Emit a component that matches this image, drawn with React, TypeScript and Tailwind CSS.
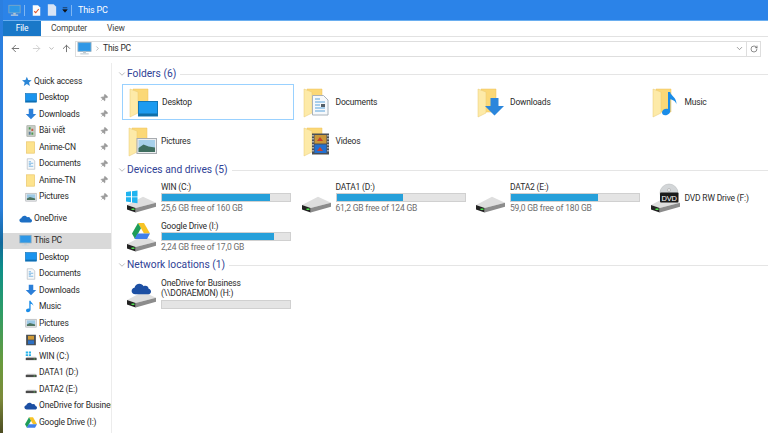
import React from 'react';
import { ArrowLeft, ArrowRight, ArrowUp, ChevronDown, ChevronRight, Pin, RotateCw } from 'lucide-react';

// small shell icons, 16x16 grid
const PcIcon = ({ className }: { className?: string }) => (
  <svg viewBox="0 0 16 16" className={className}>
    <rect x="1" y="1.5" width="14" height="9.5" fill="#3fa4ea" stroke="#8fa7b8" strokeWidth="0.8" />
    <rect x="2" y="2.5" width="12" height="7.5" fill="#2f97e6" />
    <rect x="6.5" y="11" width="3" height="2" fill="#b9c6cf" />
    <rect x="3.5" y="13" width="9" height="1.4" fill="#c9d3da" />
  </svg>
);

const DesktopSmall = () => (
  <svg viewBox="0 0 16 16" className="w-[12px] h-[12px]">
    <rect x="0.5" y="2" width="15" height="11.5" fill="#1a94ee" stroke="#0f6fb3" strokeWidth="0.8" />
    <rect x="1" y="11.5" width="14" height="2" fill="#0f6fb3" />
  </svg>
);

const DownloadSmall = () => (
  <svg viewBox="0 0 16 16" className="w-[12px] h-[12px]">
    <path d="M5 1h6v7h4l-7 7-7-7h4z" fill="#2b7fd9" />
  </svg>
);

const DocSmall = () => (
  <svg viewBox="0 0 16 16" className="w-[12px] h-[12px]">
    <path d="M3 1h7l3 3v11H3z" fill="#f6f8fa" stroke="#a9b2ba" strokeWidth="0.8" />
    <path d="M5 5h3M5 7h6M5 9h3M5 11h6" stroke="#5aa4dc" strokeWidth="1" />
  </svg>
);

const PicSmall = () => (
  <svg viewBox="0 0 16 16" className="w-[12px] h-[12px]">
    <rect x="1" y="3" width="14" height="10.5" fill="#e6e8ea" stroke="#a5a9ad" strokeWidth="0.8" />
    <rect x="2.5" y="4.5" width="11" height="7.5" fill="#9cc9e6" />
    <path d="M2.5 10l4-2 7 2v2h-11z" fill="#4e7460" />
  </svg>
);

const VideoSmall = () => (
  <svg viewBox="0 0 16 16" className="w-[12px] h-[12px]">
    <rect x="1.5" y="1" width="13" height="14" fill="#4a4f55" />
    <rect x="4" y="2.5" width="8" height="5" fill="#d09a35" />
    <rect x="4" y="8.5" width="8" height="5" fill="#2c70c4" />
  </svg>
);

const MusicSmall = () => (
  <svg viewBox="0 0 16 16" className="w-[13px] h-[13px]">
    <path d="M6.5 1h1.6c.4 2.5 3.6 3 3.4 6.5-.2-1.4-1.6-2.6-3.4-2.8V12c0 1.8-1.6 3-3.4 3C3.400 15 2.500 14.200 2.500 13c0-1.500 1.800-2.800 4-2.300z" fill="#1a8ce8" />
  </svg>
);

const YellowSmall = () => (
  <svg viewBox="0 0 16 16" className="w-[13px] h-[13px]">
    <rect x="3" y="1" width="10" height="14" fill="#fde38d" stroke="#e9c467" strokeWidth="0.8" />
  </svg>
);

const NoteSmall = () => (
  <svg viewBox="0 0 16 16" className="w-[12px] h-[12px]">
    <rect x="2.500" y="1" width="11" height="14" fill="#c8cdc6" stroke="#8b9188" strokeWidth="0.7" />
    <rect x="5" y="3" width="2.500" height="3" fill="#4d9a52" />
    <rect x="8.500" y="5" width="2.500" height="3" fill="#c75a45" />
    <rect x="5" y="9" width="2.500" height="4" fill="#5f7f9a" />
    <rect x="8.500" y="10" width="2.500" height="3" fill="#4d9a52" />
  </svg>
);

const CloudSmall = ({ className, color = '#1d6fc4' }: { className?: string; color?: string }) => (
  <svg viewBox="0 0 16 16" className={className}>
    <path d="M3.500 13C1.500 13 .5 11.700.5 10.300c0-1.500 1.100-2.500 2.300-2.600C3.300 5.700 5 4.500 6.700 4.500c1.500 0 2.800.8 3.400 2 .4-.2.9-.3 1.400-.3 1.400 0 2.500 1 2.600 2.300 1 .2 1.900 1 1.900 2.200 0 1.300-1 2.300-2.300 2.300z" fill={color} />
  </svg>
);

const DriveSmall = ({ win = false }: { win?: boolean }) => (
  <svg viewBox="0 0 16 16" className="w-[12px] h-[12px]">
    {win && <path d="M1 2h3v2.500H1zM5 2h3v2.500H5zM1 5.500h3V8H1zM5 5.500h3V8H5z" fill="#27b3ea" />}
    <path d="M1 10.500l2-1.500h11l1.500 1.500z" fill="#c9c9c9" />
    <rect x="1" y="10.500" width="14.500" height="3" fill="#4a4a4a" />
    <rect x="11.500" y="11.500" width="2" height="1" fill="#5cd35c" />
  </svg>
);

const GDriveLogo = ({ className }: { className?: string }) => (
  <svg viewBox="0 0 18 16" className={className}>
    <path d="M6 0h6l6 10.500h-6z" fill="#f7c325" />
    <path d="M6 0l3 5.300L3 16 0 10.500z" fill="#1e9d58" />
    <path d="M5.500 10.500H18L15 16H2.500z" fill="#3f7fea" />
  </svg>
);

const StarSmall = () => (
  <svg viewBox="0 0 16 16" className="w-[11px] h-[11px]">
    <path d="M8.500 1l2 4.800 5 .4-3.800 3.300 1.200 5L8.500 11.800 4.100 14.500l1.200-5L1.500 6.200l5-.4z" fill="#2b86d6" />
  </svg>
);

// large tile icons, 36x36 grid
const FolderBase = () => (
  <>
    <path d="M7 5h15v23H7z" fill="#fbd877" stroke="#ecc25f" strokeWidth="0.5" />
    <path d="M4 5l8 3v21l-8 4z" fill="#fdeaa8" stroke="#e8c873" strokeWidth="0.5" />
  </>
);

const FolderDesktop = () => (
  <svg viewBox="0 0 36 36" className="w-[36px] h-[36px]">
    <FolderBase />
    <rect x="12.500" y="17.500" width="19" height="14.500" fill="#1c9bf0" stroke="#1277b8" />
    <rect x="12.500" y="29.500" width="19" height="2.500" fill="#0f6ea8" />
  </svg>
);

const FolderPictures = () => (
  <svg viewBox="0 0 36 36" className="w-[36px] h-[36px]">
    <FolderBase />
    <rect x="12" y="15.500" width="19.500" height="15" fill="#eceef0" stroke="#a7abb0" />
    <rect x="13.500" y="17" width="16.500" height="12" fill="#a7d0ea" />
    <path d="M13.500 25l5-3.500 5 2 6.500 1V29H13.500z" fill="#3f6e5f" />
  </svg>
);

const FolderDocuments = () => (
  <svg viewBox="0 0 36 36" className="w-[36px] h-[36px]">
    <FolderBase />
    <path d="M12.500 11.500h11l4.500 4.500v15H12.500z" fill="#f7f9fb" stroke="#a9b2ba" />
    <path d="M15 15h5M15 18h10M15 21h5M15 24h10M15 27h10" stroke="#5aa4dc" strokeWidth="1.200" />
    <rect x="21" y="20" width="4" height="3" fill="#556069" />
  </svg>
);

const FolderVideos = () => (
  <svg viewBox="0 0 36 36" className="w-[36px] h-[36px]">
    <FolderBase />
    <rect x="12" y="10.500" width="17" height="21" fill="#4a4f55" />
    <rect x="14.500" y="12" width="12" height="8.500" fill="#c9973a" />
    <rect x="14.500" y="21.500" width="12" height="8.500" fill="#2370cf" />
    <path d="M17 18l3-4 3 4zM17 28l3-4 3 4z" fill="#c8402c" />
    <path d="M13 12v18M28 12v18" stroke="#e5e7e9" strokeWidth="1.200" strokeDasharray="1.500 1.500" />
  </svg>
);

const FolderDownloads = () => (
  <svg viewBox="0 0 36 36" className="w-[36px] h-[36px]">
    <FolderBase />
    <path d="M16.500 14h8v8h5.500l-9.500 9.500L11 22h5.500z" fill="#2b86dc" />
  </svg>
);

const FolderMusic = () => (
  <svg viewBox="0 0 36 36" className="w-[36px] h-[36px]">
    <FolderBase />
    <path d="M19 8h2.200c.5 4 6.500 5 6.300 12.500-.4-2.500-3-4.800-6.300-5.200V27c0 2.500-2.500 4.300-5 4.300-2 0-3.200-1.200-3.200-2.800 0-2.500 3-4.300 6-3.500z" fill="#1a8ce8" />
  </svg>
);

// isometric hard disk, shared by the drive tiles
const Hdd = () => (
  <g>
    <path d="M2 25L18 16.700l13 6-20.300 5.300z" fill="#dedede" />
    <path d="M2 25l8.700 3v4.500L2 29.500z" fill="#222222" />
    <path d="M10.700 28L31 22.700v4L10.700 32.500z" fill="#8c8c8c" />
    <rect x="6.500" y="28.500" width="3" height="1.500" fill="#4ee04e" />
  </g>
);

const DriveWin = () => (
  <svg viewBox="0 0 36 36" className="w-[36px] h-[36px]">
    <Hdd />
    <path d="M1 12l5-.7v5H1zM7 11.200l5.500-.8v6H7zM1 17.300h5v5l-5-.7zM7 17.300h5.500v6L7 22.500z" fill="#1fb4f0" />
  </svg>
);

const DriveData = () => (
  <svg viewBox="0 0 36 36" className="w-[36px] h-[36px]">
    <Hdd />
  </svg>
);

const DriveGoogle = () => (
  <svg viewBox="0 0 36 36" className="w-[36px] h-[36px]">
    <Hdd />
    <svg x="7" y="4" width="18" height="16" viewBox="0 0 18 16">
      <path d="M6 0h6l6 10.500h-6z" fill="#f7c325" />
      <path d="M6 0l3 5.300L3 16 0 10.500z" fill="#1e9d58" />
      <path d="M5.500 10.500H18L15 16H2.500z" fill="#3f7fea" />
    </svg>
  </svg>
);

const DriveCloud = () => (
  <svg viewBox="0 0 36 36" className="w-[36px] h-[36px]">
    <Hdd />
    <svg x="6" y="3" width="20" height="20" viewBox="0 0 16 16">
      <path d="M3.500 13C1.500 13 .5 11.700.5 10.300c0-1.500 1.100-2.500 2.300-2.600C3.300 5.700 5 4.500 6.700 4.500c1.500 0 2.800.8 3.400 2 .4-.2.9-.3 1.400-.3 1.400 0 2.500 1 2.600 2.300 1 .2 1.900 1 1.900 2.200 0 1.300-1 2.300-2.300 2.300z" fill="#1c4fa3" />
    </svg>
  </svg>
);

const DriveDvd = () => (
  <svg viewBox="0 0 36 36" className="w-[36px] h-[36px]">
    <Hdd />
    <circle cx="20" cy="13" r="9" fill="#d3d6d8" stroke="#aeb2b5" strokeWidth="0.5" />
    <circle cx="20" cy="10" r="1.500" fill="#f4f4f4" stroke="#9a9a9a" strokeWidth="0.5" />
    <rect x="11" y="12.500" width="18.500" height="10" rx="1" fill="#1b1b1b" />
    <text x="20.200" y="20.500" textAnchor="middle" fontSize="7.500" fontFamily="Liberation Sans, sans-serif" fill="#ffffff">DVD</text>
  </svg>
);

const quickAccess = [
  { label: 'Desktop', icon: <DesktopSmall /> },
  { label: 'Downloads', icon: <DownloadSmall /> },
  { label: 'Bài viết', icon: <NoteSmall /> },
  { label: 'Anime-CN', icon: <YellowSmall /> },
  { label: 'Documents', icon: <DocSmall /> },
  { label: 'Anime-TN', icon: <YellowSmall /> },
  { label: 'Pictures', icon: <PicSmall /> },
];

const thisPc = [
  { label: 'Desktop', icon: <DesktopSmall /> },
  { label: 'Documents', icon: <DocSmall /> },
  { label: 'Downloads', icon: <DownloadSmall /> },
  { label: 'Music', icon: <MusicSmall /> },
  { label: 'Pictures', icon: <PicSmall /> },
  { label: 'Videos', icon: <VideoSmall /> },
  { label: 'WIN (C:)', icon: <DriveSmall win /> },
  { label: 'DATA1 (D:)', icon: <DriveSmall /> },
  { label: 'DATA2 (E:)', icon: <DriveSmall /> },
  { label: 'OneDrive for Business', icon: <CloudSmall className="w-[13px] h-[13px]" color="#1c4fa3" /> },
  { label: 'Google Drive (I:)', icon: <GDriveLogo className="w-[12px] h-[11px]" /> },
];

const folders = [
  { label: 'Desktop', icon: <FolderDesktop />, selected: true },
  { label: 'Documents', icon: <FolderDocuments /> },
  { label: 'Downloads', icon: <FolderDownloads /> },
  { label: 'Music', icon: <FolderMusic /> },
  { label: 'Pictures', icon: <FolderPictures /> },
  { label: 'Videos', icon: <FolderVideos /> },
];

const drives = [
  { label: 'WIN (C:)', free: '25,6 GB free of 160 GB', fill: 'w-[108px]', icon: <DriveWin /> },
  { label: 'DATA1 (D:)', free: '61,2 GB free of 124 GB', fill: 'w-[66px]', icon: <DriveData /> },
  { label: 'DATA2 (E:)', free: '59,0 GB free of 180 GB', fill: 'w-[87px]', icon: <DriveData /> },
  { label: 'DVD RW Drive (F:)', icon: <DriveDvd /> },
  { label: 'Google Drive (I:)', free: '2,24 GB free of 17,0 GB', fill: 'w-[112px]', icon: <DriveGoogle /> },
];

const NavRow = ({ label, icon, pinned }: { label: string; icon: React.ReactNode; pinned?: boolean }) => (
  <div className="flex items-center h-[16.5px] pl-[19px]">
    <span className="w-[17px] flex justify-center shrink-0">{icon}</span>
    <span className="flex-1 min-w-0 whitespace-nowrap overflow-hidden">{label}</span>
    {pinned && <Pin size={8} className="shrink-0 mr-[3px] text-[#9a9a9a] fill-[#9a9a9a] rotate-45" />}
  </div>
);

const SectionHead = ({ title, className }: { title: string; className?: string }) => (
  <div className={`flex items-center h-[14px] pl-[1px] ${className ?? ''}`}>
    <ChevronDown size={10} strokeWidth={1.25} className="text-[#7b7b7b] shrink-0" />
    <span className="text-[10.25px] leading-none tracking-normal text-[#2f4296] whitespace-nowrap">{title}</span>
    <div className="ml-[4px] flex-1 h-px bg-[#e5e5e5]" />
  </div>
);

const DriveTile = ({ label, free, fill, icon }: { label: string; free?: string; fill?: string; icon: React.ReactNode }) => (
  <div className={`flex w-[172px] h-[36px] pl-[3px] ${free ? 'items-start' : 'items-center'}`}>
    <span className="w-[36px] h-[36px] shrink-0">{icon}</span>
    <div className="min-w-0">
      {free ? (
        <>
          <div className="leading-[14px] h-[13px] whitespace-nowrap">{label}</div>
          <div className="w-[130px] h-[9px] bg-[#e4e4e4] border border-[#d0d0d0]">
            <div className={`h-full bg-[#26a0da] ${fill}`} />
          </div>
          <div className="leading-[12px] text-[#6d6d6d] whitespace-nowrap">{free}</div>
        </>
      ) : (
        <div className="whitespace-nowrap">{label}</div>
      )}
    </div>
  </div>
);

export default function App() {
  return (
    <div className="flex w-screen h-screen overflow-hidden bg-white text-[#2b2b2b] text-[8.5px] tracking-[-0.18px] font-['Roboto',sans-serif]">
      {/* bit of desktop wallpaper showing left of the window */}
      <div className="w-[3px] shrink-0 bg-[linear-gradient(180deg,#2b7fe0_0%,#2a7fdc_48%,#12689c_56%,#0e8f88_62%,#2f9c66_72%,#6a9a3c_84%,#7c8a3a_92%,#4c4c22_100%)]" />

      <div className="flex-1 min-w-0 flex flex-col">
        {/* title bar */}
        <div className="h-[21px] bg-[#2b83e8] border-b border-[#6aaef0] flex items-center text-white shrink-0">
          <PcIcon className="ml-[5px] w-[13px] h-[13px]" />
          <div className="ml-[3px] w-px h-[11px] bg-[#7fb6f2]" />
          <svg viewBox="0 0 12 14" className="ml-[7px] w-[9px] h-[11px]">
            <path d="M1 0h7l3 3v11H1z" fill="#fbfbfb" />
            <path d="M3 8l2 2 4-5" stroke="#e0532a" strokeWidth="1.500" fill="none" />
          </svg>
          <svg viewBox="0 0 12 14" className="ml-[6px] w-[10px] h-[12px]">
            <path d="M1 0h7l3 3v11H1z" fill="#d8e4f5" />
          </svg>
          <svg viewBox="0 0 8 8" className="ml-[5px] w-[6px] h-[6px]">
            <path d="M1 1h6M1 3.500h6L4 7z" stroke="#111111" strokeWidth="0.8" fill="#111111" />
          </svg>
          <div className="ml-[3px] w-px h-[11px] bg-[#7fb6f2]" />
          <span className="ml-[6px] text-[9px] leading-none">This PC</span>
        </div>

        {/* ribbon tabs */}
        <div className="h-[16px] border-b border-[#e2e2e2] flex shrink-0">
          <div className="w-[38px] bg-[#1a78c8] text-white flex items-center justify-center">File</div>
          <div className="ml-[10px] flex items-center text-[#444444]">Computer</div>
          <div className="ml-[20px] flex items-center text-[#444444]">View</div>
        </div>

        {/* address bar */}
        <div className="h-[26px] pb-[3px] flex items-center shrink-0">
          <ArrowLeft size={11} className="ml-[7px] text-[#6a6a6a]" />
          <ArrowRight size={11} className="ml-[10px] text-[#cfcfcf]" />
          <ChevronDown size={7} strokeWidth={2} className="ml-[6px] text-[#8a8a8a]" />
          <ArrowUp size={11} className="ml-[6px] text-[#6a6a6a]" />
          <div className="ml-[3px] flex-1 h-[16px] border border-[#dedede] flex items-center">
            <PcIcon className="ml-[1px] w-[15px] h-[15px]" />
            <ChevronRight size={7} strokeWidth={1.5} className="ml-[2px] text-[#6a6a6a]" />
            <span className="ml-[2px]">This PC</span>
            <ChevronDown size={9} strokeWidth={1.5} className="ml-auto mr-[2px] text-[#555555]" />
          </div>
          <div className="w-[14px] h-[16px] mr-[7px] border border-l-0 border-[#dedede] flex items-center justify-center">
            <RotateCw size={8} className="text-[#555555]" />
          </div>
        </div>

        <div className="flex flex-1 min-h-0">
          {/* navigation pane */}
          <div className="w-[108px] shrink-0 pt-[10px] overflow-hidden">
            <div className="flex items-center h-[16.5px] pl-[17px]">
              <span className="w-[13px] flex justify-center shrink-0"><StarSmall /></span>
              <span className="ml-[1px]">Quick access</span>
            </div>
            {quickAccess.map(item => (
              <NavRow key={item.label} label={item.label} icon={item.icon} pinned />
            ))}
            <div className="flex items-center h-[16.5px] pl-[16px] mt-[5.500px]">
              <CloudSmall className="w-[13px] h-[13px]" />
              <span className="ml-[2px]">OneDrive</span>
            </div>
            <div className="flex items-center h-[16.5px] pl-[16px] mt-[5.500px] bg-[#d9d9d9]">
              <PcIcon className="w-[13px] h-[13px]" />
              <span className="ml-[2px]">This PC</span>
            </div>
            {thisPc.map(item => (
              <NavRow key={item.label} label={item.label} icon={item.icon} />
            ))}
          </div>

          {/* file list */}
          <div className="flex-1 min-w-0 border-l border-[#ececec] pt-[4px] pl-[4px]">
            <SectionHead title="Folders (6)" />
            <div className="ml-[6px] mt-[3px] grid grid-cols-[repeat(4,174.500px)] gap-y-[3px]">
              {folders.map(item => (
                <div
                  key={item.label}
                  className={`flex items-center w-[172px] h-[36px] pl-[3px] ${item.selected ? 'border border-[#99d1ff]' : ''}`}
                >
                  <span className="w-[36px] h-[36px] shrink-0">{item.icon}</span>
                  <span>{item.label}</span>
                </div>
              ))}
            </div>

            <SectionHead title="Devices and drives (5)" className="mt-[4px]" />
            <div className="ml-[6px] mt-[3px] grid grid-cols-[repeat(4,174.500px)] gap-y-[3px]">
              {drives.map(item => (
                <DriveTile key={item.label} label={item.label} free={item.free} fill={item.fill} icon={item.icon} />
              ))}
            </div>

            <SectionHead title="Network locations (1)" className="mt-[3px]" />
            <div className="ml-[6px] mt-[3px] flex w-[172px] h-[36px] pl-[3px]">
              <span className="w-[36px] h-[36px] shrink-0"><DriveCloud /></span>
              <div className="pt-[3px]">
                <div className="leading-[10px] whitespace-nowrap">OneDrive for Business</div>
                <div className="leading-[10px] whitespace-nowrap">(\\DORAEMON) (H:)</div>
                <div className="mt-[2px] w-[130px] h-[9px] bg-[#e4e4e4] border border-[#d0d0d0]" />
              </div>
            </div>
          </div>
        </div>
      </div>
    </div>
  );
}
